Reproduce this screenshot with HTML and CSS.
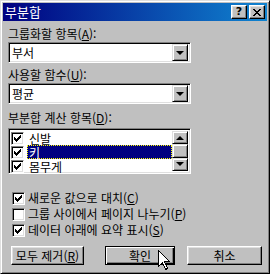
FILE: index.html
```html
<!DOCTYPE html>
<html lang="ko">
<head>
  <meta charset="UTF-8" />
  <title>부분합</title>
  <link rel="stylesheet" href="styles.css">
</head>
<body>
  <div class="window">
    <div class="titlebar">
      <span class="title">부분합</span>
      <div class="title-btns">
        <span class="tbtn help">?</span>
        <span class="tbtn close">
          <svg width="8" height="7" viewBox="0 0 8 7" shape-rendering="crispEdges">
            <path d="M0 0h2v1h-2zM6 0h2v1h-2zM1 1h2v1h-2zM5 1h2v1h-2zM2 2h4v1h-4zM3 3h2v1h-2zM2 4h4v1h-4zM1 5h2v1h-2zM5 5h2v1h-2zM0 6h2v1h-2zM6 6h2v1h-2z" fill="#000"/>
          </svg>
        </span>
      </div>
    </div>

    <div class="content">
      <div class="field-label first">그룹화할 항목(<u>A</u>):</div>
      <div class="combo">
        <span class="combo-value">부서</span>
        <span class="drop-btn"><span class="arrow-down"></span></span>
      </div>

      <div class="field-label">사용할 함수(<u>U</u>):</div>
      <div class="combo">
        <span class="combo-value">평균</span>
        <span class="drop-btn"><span class="arrow-down"></span></span>
      </div>

      <div class="field-label third">부분합 계산 항목(<u>D</u>):</div>
      <div class="listbox">
        <div class="list-rows">
          <div class="list-row">
            <span class="check"><svg width="7" height="7" viewBox="0 0 7 7" shape-rendering="crispEdges"><path d="M0 2h1v3h-1zM1 3h1v3h-1zM2 4h1v3h-1zM3 3h1v3h-1zM4 2h1v3h-1zM5 1h1v3h-1zM6 0h1v3h-1z"/></svg></span>
            <span class="item-text">신발</span>
          </div>
          <div class="list-row selected">
            <span class="check"><svg width="7" height="7" viewBox="0 0 7 7" shape-rendering="crispEdges"><path d="M0 2h1v3h-1zM1 3h1v3h-1zM2 4h1v3h-1zM3 3h1v3h-1zM4 2h1v3h-1zM5 1h1v3h-1zM6 0h1v3h-1z"/></svg></span>
            <span class="item-text">키</span>
          </div>
          <div class="list-row">
            <span class="check"><svg width="7" height="7" viewBox="0 0 7 7" shape-rendering="crispEdges"><path d="M0 2h1v3h-1zM1 3h1v3h-1zM2 4h1v3h-1zM3 3h1v3h-1zM4 2h1v3h-1zM5 1h1v3h-1zM6 0h1v3h-1z"/></svg></span>
            <span class="item-text">몸무게</span>
          </div>
        </div>
        <div class="scrollbar">
          <span class="sb-btn"><span class="arrow-up"></span></span>
          <span class="sb-thumb"></span>
          <span class="sb-btn"><span class="arrow-down"></span></span>
        </div>
      </div>

      <div class="options">
        <div class="option">
          <span class="check"><svg width="7" height="7" viewBox="0 0 7 7" shape-rendering="crispEdges"><path d="M0 2h1v3h-1zM1 3h1v3h-1zM2 4h1v3h-1zM3 3h1v3h-1zM4 2h1v3h-1zM5 1h1v3h-1zM6 0h1v3h-1z"/></svg></span>
          <span>새로운 값으로 대치(<u>C</u>)</span>
        </div>
        <div class="option">
          <span class="check"></span>
          <span>그룹 사이에서 페이지 나누기(<u>P</u>)</span>
        </div>
        <div class="option">
          <span class="check"><svg width="7" height="7" viewBox="0 0 7 7" shape-rendering="crispEdges"><path d="M0 2h1v3h-1zM1 3h1v3h-1zM2 4h1v3h-1zM3 3h1v3h-1zM4 2h1v3h-1zM5 1h1v3h-1zM6 0h1v3h-1z"/></svg></span>
          <span>데이터 아래에 요약 표시(<u>S</u>)</span>
        </div>
      </div>

      <div class="buttons">
        <button class="btn btn-clear">모두 제거(<u>R</u>)</button>
        <button class="btn btn-ok">확인</button>
        <button class="btn btn-cancel">취소</button>
      </div>
    </div>

    <!-- mouse pointer resting on the OK button -->
    <svg class="cursor" width="12" height="20" viewBox="0 0 12 20" shape-rendering="crispEdges">
      <path d="M0.5 0.5 L0.5 16.5 L4.5 12.5 L7.5 19.5 L9.5 18.5 L6.5 11.5 L11.5 11.5 Z" fill="#fff" stroke="#000" stroke-width="1"/>
    </svg>
  </div>
</body>
</html>
```

FILE: styles.css
```css
body {
  margin: 0;
  font-family: "Noto Sans CJK KR", "Noto Sans", sans-serif;
  font-size: 12px;
  color: #000;
  background: #c0c0c0;
}

.window {
  position: relative;
  box-sizing: border-box;
  width: 270px;
  height: 274px;
  padding: 2px;
  background: #c0c0c0;
  border: 1px solid;
  border-color: #dfdfdf #000 #000 #dfdfdf;
  box-shadow: inset 1px 1px #fff, inset -1px -1px #808080;
  overflow: hidden;
}

.titlebar {
  height: 18px;
  display: flex;
  align-items: center;
  justify-content: space-between;
  padding-left: 2px;
  background: linear-gradient(to right, #000080, #1084d0);
}

.title {
  color: #fff;
  font-size: 13px;
  line-height: 18px;
}

.title-btns {
  display: flex;
  gap: 2px;
  margin-right: 2px;
}

.tbtn {
  box-sizing: border-box;
  width: 16px;
  height: 14px;
  display: flex;
  align-items: center;
  justify-content: center;
  background: #c0c0c0;
  border: 1px solid;
  border-color: #fff #000 #000 #fff;
  box-shadow: inset -1px -1px #808080, inset 1px 1px #dfdfdf;
}

.help {
  font-family: "DejaVu Sans", sans-serif;
  font-weight: bold;
  font-size: 11px;
  line-height: 12px;
}

.content {
  padding: 0 5px;
}

.field-label {
  height: 14px;
  line-height: 14px;
  margin-top: 5px;
  margin-bottom: 1px;
}

.field-label.first {
  margin-top: 6px;
}

.field-label.third {
  margin-top: 7px;
  margin-bottom: 3px;
}

u {
  text-decoration: underline;
  text-underline-offset: 1px;
}

.combo,
.listbox {
  box-sizing: border-box;
  width: 183px;
  background: #fff;
  border: 1px solid;
  border-color: #808080 #fff #fff #808080;
  box-shadow: inset 1px 1px #000, inset -1px -1px #dfdfdf;
  padding: 2px;
}

.combo {
  height: 21px;
  display: flex;
  align-items: center;
  justify-content: space-between;
  padding-left: 3px;
}

.combo-value {
  line-height: 15px;
}

.drop-btn,
.sb-btn {
  box-sizing: border-box;
  width: 16px;
  height: 17px;
  display: flex;
  align-items: center;
  justify-content: center;
  background: #c0c0c0;
  border: 1px solid;
  border-color: #dfdfdf #000 #000 #dfdfdf;
  box-shadow: inset 1px 1px #fff, inset -1px -1px #808080;
}

.arrow-down,
.arrow-up {
  width: 0;
  height: 0;
  border-left: 4px solid transparent;
  border-right: 4px solid transparent;
}

.arrow-down {
  border-top: 4px solid #000;
}

.arrow-up {
  border-bottom: 4px solid #000;
}

.listbox {
  height: 46px;
  display: flex;
}

.list-rows {
  flex: 1;
}

.list-row {
  height: 14px;
  display: flex;
  align-items: center;
}

.list-row .check {
  margin-left: 0;
  margin-right: 3px;
}

.item-text {
  flex: 1;
  box-sizing: border-box;
  height: 14px;
  line-height: 13px;
  padding-left: 1px;
  border: 1px dotted transparent;
}

.selected .item-text {
  background: #000080;
  color: #fff;
  border-color: #ffff00;
}

.scrollbar {
  width: 16px;
  display: flex;
  flex-direction: column;
}

.scrollbar .sb-btn {
  height: 14px;
}

.sb-thumb {
  box-sizing: border-box;
  height: 14px;
  background: #c0c0c0;
  border: 1px solid;
  border-color: #dfdfdf #000 #000 #dfdfdf;
  box-shadow: inset 1px 1px #fff, inset -1px -1px #808080;
}

.check {
  box-sizing: border-box;
  width: 13px;
  height: 13px;
  flex: none;
  display: flex;
  align-items: center;
  justify-content: center;
  background: #fff;
  border: 1px solid;
  border-color: #808080 #fff #fff #808080;
  box-shadow: inset 1px 1px #000, inset -1px -1px #dfdfdf;
}

.options {
  margin-top: 16px;
  margin-left: 4px;
}

.option {
  height: 16px;
  display: flex;
  align-items: center;
  gap: 3px;
  line-height: 16px;
}

.buttons {
  display: flex;
  margin-top: 8px;
  margin-left: 3px;
}

.btn {
  box-sizing: border-box;
  height: 19px;
  padding: 0;
  font-family: inherit;
  font-size: 12px;
  line-height: 15px;
  color: #000;
  background: #c0c0c0;
  border: 1px solid;
  border-color: #fff #000 #000 #fff;
  box-shadow: inset -1px -1px #808080, inset 1px 1px #dfdfdf;
}

.btn-clear {
  width: 73px;
}

.btn-ok {
  width: 70px;
  margin-left: 21px;
  border-color: #000;
  box-shadow: inset 1px 1px #fff, inset -1px -1px #000, inset -2px -2px #808080;
}

.btn-cancel {
  width: 75px;
  margin-left: 12px;
}

.cursor {
  position: absolute;
  left: 157px;
  top: 249px;
}
```
